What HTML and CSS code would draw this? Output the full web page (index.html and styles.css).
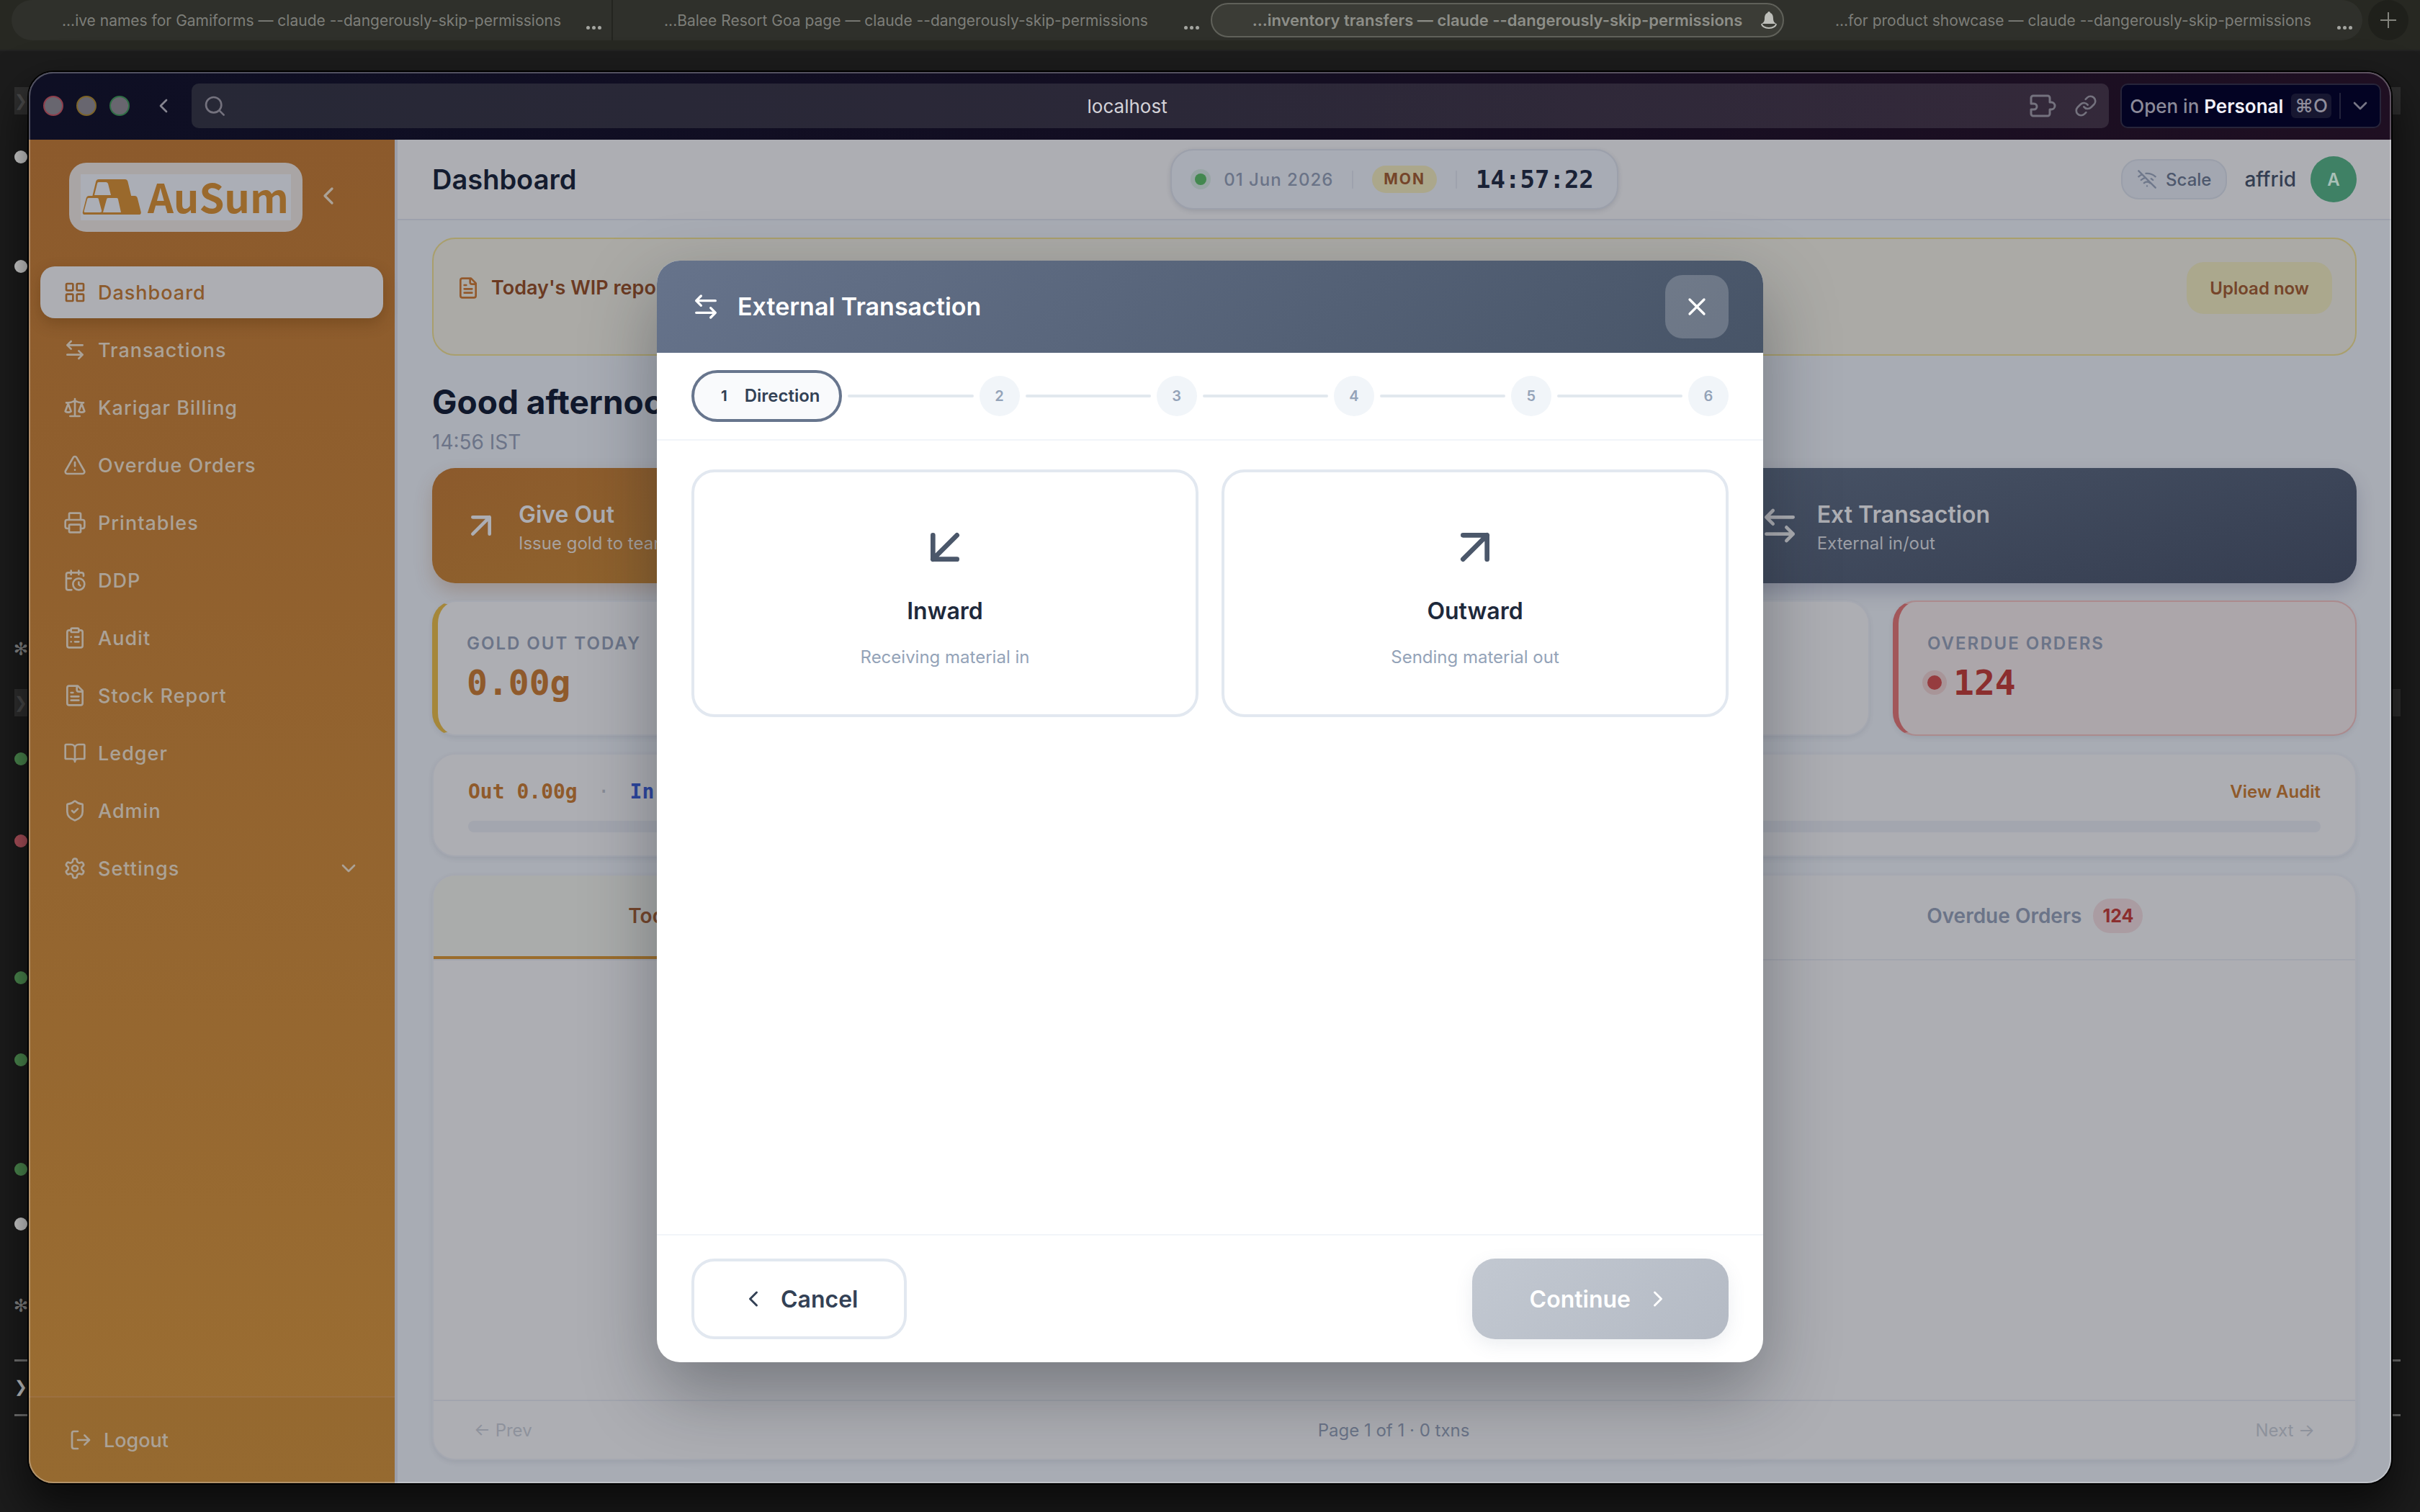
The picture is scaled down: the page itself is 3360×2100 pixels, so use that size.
FILE: index.html
```html
<!DOCTYPE html>
<html lang="en">
<head>
<meta charset="utf-8">
<title>AuSum – Dashboard</title>
<meta name="viewport" content="width=device-width, initial-scale=1">
<link rel="stylesheet" href="styles.css">
</head>
<body>
<svg class="sprite" aria-hidden="true">
  <symbol id="i-grid" viewBox="0 0 24 24"><rect x="3" y="3" width="7" height="7" rx="1"/><rect x="14" y="3" width="7" height="7" rx="1"/><rect x="14" y="14" width="7" height="7" rx="1"/><rect x="3" y="14" width="7" height="7" rx="1"/></symbol>
  <symbol id="i-swap" viewBox="0 0 24 24"><path d="M8 3 4 7l4 4M4 7h16M16 21l4-4-4-4M20 17H4"/></symbol>
  <symbol id="i-scale" viewBox="0 0 24 24"><path d="m16 16 3-8 3 8c-.87.65-1.92 1-3 1s-2.13-.35-3-1ZM2 16l3-8 3 8c-.87.65-1.92 1-3 1s-2.13-.35-3-1ZM7 21h10M12 3v18M3 7h2c2 0 5-1 7-2 2 1 5 2 7 2h2"/></symbol>
  <symbol id="i-alert" viewBox="0 0 24 24"><path d="m21.73 18-8-14a2 2 0 0 0-3.48 0l-8 14A2 2 0 0 0 4 21h16a2 2 0 0 0 1.73-3ZM12 9v4M12 17h.01"/></symbol>
  <symbol id="i-print" viewBox="0 0 24 24"><path d="M6 18H4a2 2 0 0 1-2-2v-5a2 2 0 0 1 2-2h16a2 2 0 0 1 2 2v5a2 2 0 0 1-2 2h-2M6 9V3a1 1 0 0 1 1-1h10a1 1 0 0 1 1 1v6"/><rect x="6" y="14" width="12" height="8" rx="1"/></symbol>
  <symbol id="i-calclock" viewBox="0 0 24 24"><path d="M21 7.5V6a2 2 0 0 0-2-2H5a2 2 0 0 0-2 2v14a2 2 0 0 0 2 2h3.500M16 2v4M8 2v4M3 10h5M17.500 17.500 16 16.300V14"/><circle cx="16" cy="16" r="6"/></symbol>
  <symbol id="i-clip" viewBox="0 0 24 24"><rect x="8" y="2" width="8" height="4" rx="1"/><path d="M16 4h2a2 2 0 0 1 2 2v14a2 2 0 0 1-2 2H6a2 2 0 0 1-2-2V6a2 2 0 0 1 2-2h2M12 11h4M12 16h4M8 11h.01M8 16h.01"/></symbol>
  <symbol id="i-file" viewBox="0 0 24 24"><path d="M15 2H6a2 2 0 0 0-2 2v16a2 2 0 0 0 2 2h12a2 2 0 0 0 2-2V7ZM14 2v4a2 2 0 0 0 2 2h4M10 9H8M16 13H8M16 17H8"/></symbol>
  <symbol id="i-book" viewBox="0 0 24 24"><path d="M12 7v14M3 18a1 1 0 0 1-1-1V4a1 1 0 0 1 1-1h5a4 4 0 0 1 4 4 4 4 0 0 1 4-4h5a1 1 0 0 1 1 1v13a1 1 0 0 1-1 1h-6a3 3 0 0 0-3 3 3 3 0 0 0-3-3z"/></symbol>
  <symbol id="i-shield" viewBox="0 0 24 24"><path d="M20 13c0 5-3.500 7.500-7.660 8.950a1 1 0 0 1-.67-.01C7.500 20.500 4 18 4 13V6a1 1 0 0 1 1-1c2 0 4.500-1.200 6.240-2.720a1.170 1.170 0 0 1 1.520 0C14.510 3.810 17 5 19 5a1 1 0 0 1 1 1zM9 12l2 2 4-4"/></symbol>
  <symbol id="i-gear" viewBox="0 0 24 24"><path d="M12.220 2h-.44a2 2 0 0 0-2 2v.18a2 2 0 0 1-1 1.730l-.43.25a2 2 0 0 1-2 0l-.15-.08a2 2 0 0 0-2.730.73l-.22.38a2 2 0 0 0 .73 2.730l.15.1a2 2 0 0 1 1 1.720v.51a2 2 0 0 1-1 1.740l-.15.09a2 2 0 0 0-.73 2.730l.22.38a2 2 0 0 0 2.730.73l.15-.08a2 2 0 0 1 2 0l.43.25a2 2 0 0 1 1 1.730V20a2 2 0 0 0 2 2h.44a2 2 0 0 0 2-2v-.18a2 2 0 0 1 1-1.730l.43-.25a2 2 0 0 1 2 0l.15.08a2 2 0 0 0 2.730-.73l.22-.39a2 2 0 0 0-.73-2.730l-.15-.08a2 2 0 0 1-1-1.740v-.5a2 2 0 0 1 1-1.740l.15-.09a2 2 0 0 0 .73-2.730l-.22-.38a2 2 0 0 0-2.730-.73l-.15.08a2 2 0 0 1-2 0l-.43-.25a2 2 0 0 1-1-1.730V4a2 2 0 0 0-2-2z"/><circle cx="12" cy="12" r="3"/></symbol>
  <symbol id="i-logout" viewBox="0 0 24 24"><path d="M9 21H5a2 2 0 0 1-2-2V5a2 2 0 0 1 2-2h4M16 17l5-5-5-5M21 12H9"/></symbol>
  <symbol id="i-down" viewBox="0 0 24 24"><path d="m6 9 6 6 6-6"/></symbol>
  <symbol id="i-left" viewBox="0 0 24 24"><path d="m15 18-6-6 6-6"/></symbol>
  <symbol id="i-right" viewBox="0 0 24 24"><path d="m9 18 6-6-6-6"/></symbol>
  <symbol id="i-upright" viewBox="0 0 24 24"><path d="M7 7h10v10M7 17 17 7"/></symbol>
  <symbol id="i-downleft" viewBox="0 0 24 24"><path d="M17 7 7 17M17 17H7V7"/></symbol>
  <symbol id="i-close" viewBox="0 0 24 24"><path d="M18 6 6 18M6 6l12 12"/></symbol>
  <symbol id="i-search" viewBox="0 0 24 24"><circle cx="11" cy="11" r="8"/><path d="m17 17 4.500 4.500"/></symbol>
  <symbol id="i-wifioff" viewBox="0 0 24 24"><path d="M12 20h.01M8.500 16.430a5 5 0 0 1 7 0M5 12.860a10 10 0 0 1 5.170-2.690M19 12.860a10 10 0 0 0-2-1.520M2 8.820a15 15 0 0 1 4.180-2.640M22 8.820a15 15 0 0 0-11.290-3.760M2 2l20 20"/></symbol>
  <symbol id="i-puzzle" viewBox="0 0 38 32"><path d="M3 13V5a3 3 0 0 1 3-3h20a3 3 0 0 1 3 3v6h2a5 5 0 0 1 0 10h-2v6a3 3 0 0 1-3 3H6a3 3 0 0 1-3-3v-6h4a4 4 0 0 0 0-8Z"/></symbol>
  <symbol id="i-link" viewBox="0 0 24 24"><path d="M10 13a5 5 0 0 0 7.540.54l3-3a5 5 0 0 0-7.070-7.070l-1.720 1.710M14 11a5 5 0 0 0-7.540-.54l-3 3a5 5 0 0 0 7.070 7.070l1.710-1.710"/></symbol>
</svg>

<div class="desktop">
  <div class="term-bar">
    <div class="term-tabs">
      <div class="term-tab"><span class="term-title">...ive names for Gamiforms — claude --dangerously-skip-permissions</span><span class="dots"><i></i><i></i><i></i></span></div>
      <div class="term-tab term-tab-split"><span class="term-title">...Balee Resort Goa page — claude --dangerously-skip-permissions</span><span class="dots"><i></i><i></i><i></i></span></div>
      <div class="term-tab term-tab-on"><span class="term-title">...inventory transfers — claude --dangerously-skip-permissions</span><svg class="bell" viewBox="0 0 24 26"><path d="M12 1c1 0 2 1 2 2 3 1 4 4 4 8 0 3 1 5 4 7H2c3-2 4-4 4-7 0-4 1-7 4-8 0-1 1-2 2-2Z"/><path class="bell-ring" d="M2 18c0 3 4 6 10 6s10-3 10-6"/></svg></div>
      <div class="term-tab"><span class="term-title">...for product showcase — claude --dangerously-skip-permissions</span><span class="dots"><i></i><i></i><i></i></span></div>
    </div>
    <button class="term-add" aria-label="New tab"></button>
  </div>
<pre class="term"><span class="t-hl">❯</span>

<b class="w"></b>



<b class="w"></b>













<em>✻</em>

<span class="t-hl">❯</span>

<b class="g"></b>


<b class="r"></b>




<b class="g"></b>


<b class="g"></b>



<b class="g"></b>

<b class="w"></b>


<em>✻</em>

<span class="t-rule"></span>
<strong>❯</strong>
<span class="t-rule"></span></pre>

  <div class="window">
    <div class="toolbar">
      <div class="lights"><span class="light light-r"></span><span class="light light-y"></span><span class="light light-g"></span></div>
      <button class="nav-back" aria-label="Back"><svg class="ic ic-32"><use href="#i-left"/></svg></button>
      <label class="address">
        <svg class="ic ic-32"><use href="#i-search"/></svg>
        <input type="text" value="localhost" aria-label="Address">
        <svg class="puzzle"><use href="#i-puzzle"/></svg>
        <svg class="ic ic-32"><use href="#i-link"/></svg>
      </label>
      <div class="open-in">
        <button class="open-btn">Open in <b>Personal</b><kbd>⌘O</kbd></button>
        <button class="open-more" aria-label="More"><svg class="ic ic-32"><use href="#i-down"/></svg></button>
      </div>
    </div>

    <div class="app">
      <aside class="sidebar">
        <div class="brand">
          <div class="logo">
            <div class="logo-in">
              <svg class="bars" viewBox="0 0 82 52"><path class="bar-side" d="M22 1h40q3 0 4 3l5 20h5q3 0 4 3l5 19q1 4-3 4H4q-4 0-3-4l5-19q1-3 4-3h5l5-20q1-3 4-3Z" transform="scale(.96 1)"/><path class="bar-face" d="M23 5h10q2 0 3 2l4 16H17l4-16q0-2 2-2ZM9 27h12q2 0 2 2l4 15q1 3-2 3H4q-2 0-1-3l4-15q0-2 2-2ZM36 27h12q2 0 2 2l4 18H29l5-18q0-2 2-2Z"/></svg>
              <span class="logo-name">AuSum</span>
            </div>
          </div>
          <button class="collapse" aria-label="Collapse menu"><svg class="ic ic-40"><use href="#i-left"/></svg></button>
        </div>
        <nav class="nav">
          <a class="nav-item nav-on" href="#"><svg class="ic ic-32"><use href="#i-grid"/></svg>Dashboard</a>
          <a class="nav-item" href="#"><svg class="ic ic-32"><use href="#i-swap"/></svg>Transactions</a>
          <a class="nav-item" href="#"><svg class="ic ic-32"><use href="#i-scale"/></svg>Karigar Billing</a>
          <a class="nav-item" href="#"><svg class="ic ic-32"><use href="#i-alert"/></svg>Overdue Orders</a>
          <a class="nav-item" href="#"><svg class="ic ic-32"><use href="#i-print"/></svg>Printables</a>
          <a class="nav-item" href="#"><svg class="ic ic-32"><use href="#i-calclock"/></svg>DDP</a>
          <a class="nav-item" href="#"><svg class="ic ic-32"><use href="#i-clip"/></svg>Audit</a>
          <a class="nav-item" href="#"><svg class="ic ic-32"><use href="#i-file"/></svg>Stock Report</a>
          <a class="nav-item" href="#"><svg class="ic ic-32"><use href="#i-book"/></svg>Ledger</a>
          <a class="nav-item" href="#"><svg class="ic ic-32"><use href="#i-shield"/></svg>Admin</a>
          <a class="nav-item" href="#"><svg class="ic ic-32"><use href="#i-gear"/></svg>Settings<svg class="ic ic-32 nav-more"><use href="#i-down"/></svg></a>
        </nav>
        <div class="side-foot"><a class="logout" href="#"><svg class="ic ic-32"><use href="#i-logout"/></svg>Logout</a></div>
      </aside>

      <main class="main">
        <header class="head">
          <h1 class="head-title">Dashboard</h1>
          <div class="clock">
            <span class="live"></span>
            <span class="date">01 Jun 2026</span>
            <span class="sep"></span>
            <span class="day">MON</span>
            <span class="sep"></span>
            <time class="time">14:57:22</time>
          </div>
          <div class="user">
            <button class="scale-btn"><svg class="ic ic-28"><use href="#i-wifioff"/></svg>Scale</button>
            <span class="user-name">affrid</span>
            <span class="avatar">A</span>
          </div>
        </header>

        <div class="content">
          <section class="notice">
            <svg class="ic ic-32"><use href="#i-file"/></svg>
            <p>Today's WIP report</p>
            <button class="upload">Upload now</button>
          </section>

          <h2 class="hello">Good afternoon</h2>
          <p class="hello-time">14:56 IST</p>

          <div class="actions">
            <button class="action action-out"><svg class="ic ic-56"><use href="#i-upright"/></svg><span class="action-text"><b>Give Out</b><small>Issue gold to team</small></span></button>
            <button class="action action-ext"><svg class="ic ic-56"><use href="#i-swap"/></svg><span class="action-text"><b>Ext Transaction</b><small>External in/out</small></span></button>
          </div>

          <div class="stats">
            <div class="stat stat-gold"><span class="stat-label">GOLD OUT TODAY</span><span class="stat-value">0.00g</span></div>
            <div class="stat"></div>
            <div class="stat"></div>
            <div class="stat stat-red"><span class="stat-label">OVERDUE ORDERS</span><span class="stat-value"><i class="pulse"></i>124</span></div>
          </div>

          <section class="card flow">
            <div class="flow-row"><span class="flow-out">Out 0.00g</span><span class="flow-dot">·</span><span class="flow-in">In 0.00g</span><a class="flow-link" href="#">View Audit</a></div>
            <div class="track"></div>
          </section>

          <section class="card txns">
            <div class="tabs">
              <button class="tab tab-on">Today's Transactions<span class="count">0</span></button>
              <button class="tab tab-last">Overdue Orders<span class="count">124</span></button>
            </div>
            <div class="txn-body"></div>
            <div class="pager"><button class="page-btn" disabled>← Prev</button><span class="page-info">Page 1 of 1 · 0 txns</span><button class="page-btn" disabled>Next →</button></div>
          </section>
        </div>
      </main>

      <div class="overlay">
        <div class="modal" role="dialog" aria-labelledby="dlg-title">
          <div class="dlg-head">
            <svg class="ic ic-40"><use href="#i-swap"/></svg>
            <h2 id="dlg-title">External Transaction</h2>
            <button class="dlg-close" aria-label="Close"><svg class="ic ic-40"><use href="#i-close"/></svg></button>
          </div>
          <div class="steps">
            <span class="step step-on"><span class="step-no">1</span>Direction</span><i class="step-line"></i>
            <span class="step">2</span><i class="step-line"></i>
            <span class="step">3</span><i class="step-line"></i>
            <span class="step">4</span><i class="step-line"></i>
            <span class="step">5</span><i class="step-line"></i>
            <span class="step">6</span>
          </div>
          <div class="dlg-body">
            <button class="choice"><svg class="ic ic-80"><use href="#i-downleft"/></svg><b>Inward</b><span>Receiving material in</span></button>
            <button class="choice"><svg class="ic ic-80"><use href="#i-upright"/></svg><b>Outward</b><span>Sending material out</span></button>
          </div>
          <div class="dlg-foot">
            <button class="btn btn-cancel"><svg class="ic ic-36"><use href="#i-left"/></svg>Cancel</button>
            <button class="btn btn-next" disabled>Continue<svg class="ic ic-36"><use href="#i-right"/></svg></button>
          </div>
        </div>
      </div>
    </div>
  </div>
</div>
</body>
</html>
```
FILE: styles.css
```css
*, *::before, *::after { box-sizing: border-box; }
html, body { height: 100%; margin: 0; }
body { font-family: Inter, "Noto Sans", sans-serif; color: #141c2f; background: #1c1c1c; }
h1, h2, p { margin: 0; }
button, input { font: inherit; color: inherit; background: none; border: 0; padding: 0; margin: 0; text-align: inherit; }
a { color: inherit; text-decoration: none; }
.sprite { position: absolute; width: 0; height: 0; }

.ic { flex: none; fill: none; stroke: currentColor; stroke-width: 2; stroke-linecap: round; stroke-linejoin: round; }
.ic-28 { width: 28px; height: 28px; }
.ic-32 { width: 32px; height: 32px; }
.ic-36 { width: 36px; height: 36px; }
.ic-40 { width: 40px; height: 40px; }
.ic-56 { width: 56px; height: 56px; }
.ic-80 { width: 80px; height: 80px; }

/* Terminal behind the browser */
.desktop { position: relative; min-height: 100vh; overflow: hidden; background: #1c1c1c; }
.term-bar { display: flex; align-items: flex-start; gap: 8px; height: 71px; padding: 0 16px; background: #272822; border-bottom: 2px solid #222; }
.term-tabs { flex: 1; display: grid; grid-template-columns: 833fr 832fr 796fr 803fr; height: 56px; background: #2f302b; border-radius: 28px; }
.term-tab { display: grid; grid-template-columns: 1fr auto 1fr; align-items: center; font-size: 21px; color: #7d7e79; white-space: nowrap; }
.term-title { grid-column: 2; }
.term-tab-split { padding-right: 16px; border-left: 2px solid #242520; }
.term-tab-split .dots { padding-right: 0; }
.term-tab-on { margin: 4px 0; border: 2px solid #60615a; border-radius: 24px; background: #3b3c36; color: #8d8e88; font-size: 22px; font-weight: 600; }
.dots { display: flex; gap: 3px; justify-self: end; padding: 20px 14px 0 0; }
.dots i { width: 5px; height: 5px; border-radius: 50%; background: #a4a5a0; }
.bell { justify-self: end; width: 24px; height: 26px; margin-right: 7px; fill: #bdbeb9; }
.bell-ring { fill: none; stroke: #bdbeb9; stroke-width: 2; }
.term-add { flex: none; width: 56px; height: 56px; border-radius: 50%; background: linear-gradient(#83847d, #83847d) center / 22px 2px no-repeat, linear-gradient(#83847d, #83847d) center / 2px 22px no-repeat, #1f201b; }
.term { margin: 0; padding: 50px 27px 0 20px; font: 30px/38px "DejaVu Sans Mono", monospace; color: #8b8b8b; }
.term b { display: inline-block; width: 18px; height: 18px; border-radius: 50%; vertical-align: middle; }
.term em { font-style: normal; display: inline-block; height: 38px; vertical-align: top; }
.term strong { font-weight: 700; color: #ccc; }
.w { background: #d6d6d6; }
.g { background: #4f8f52; }
.r { background: #b5545f; }
.t-hl { display: inline-block; vertical-align: top; width: 100%; height: 38px; background: #303030; color: #4c4c4c; }
.t-rule { display: inline-block; vertical-align: middle; width: 100%; height: 3px; background: #777; }

/* Browser window */
.window { position: absolute; inset: 100px 40px 40px; display: flex; flex-direction: column; border-radius: 34px; overflow: hidden; background: #a8acb4; }
.window::after { content: ""; position: absolute; inset: 0; border: 2px solid rgba(255, 255, 255, .28); border-radius: 34px; pointer-events: none; }
.desktop::before { content: ""; position: absolute; inset: 100px 40px 40px; border-radius: 34px; box-shadow: 0 0 0 2px #000, 0 30px 60px 6px rgba(0, 0, 0, .6); }
.toolbar { flex: none; display: flex; align-items: center; height: 94px; padding: 0 14px 0 20px; background: linear-gradient(100deg, #0e0f24, #130e22 50%, #1f0f22); }
.lights { display: flex; gap: 18px; }
.light { width: 28px; height: 28px; border-radius: 50%; border: 2px solid; background: #68666f; }
.light-r { border-color: #8f3f4c; }
.light-y { border-color: #7d6428; }
.light-g { border-color: #2f6f45; }
.nav-back { display: grid; place-items: center; width: 56px; margin: 0 11px 0 19px; color: #85848f; }
.address { flex: 1; display: flex; align-items: center; gap: 24px; height: 62px; padding: 0 16px; border-radius: 10px; background: linear-gradient(100deg, #272836, #2b2838 50%, #34293a); color: #74727e; }
.address input { flex: 1; min-width: 0; text-align: center; font-size: 26px; color: #d4d3d8; }
.puzzle { width: 40px; height: 32px; fill: none; stroke: currentColor; stroke-width: 3; stroke-linejoin: round; }
.open-in { display: flex; align-items: center; height: 62px; margin-left: 16px; border: 2px solid #27253a; border-radius: 10px; background: #030323; font-size: 26px; color: #8b8a99; }
.open-btn { display: flex; align-items: center; gap: 7px; padding: 0 11px; font-weight: 500; }
.open-btn b { font-weight: 600; color: #f2f1f8; }
.open-btn kbd { margin-left: 4px; padding: 0 5px; border-radius: 6px; font: 500 26px/34px Inter, "DejaVu Sans", sans-serif; background: #171731; color: #8f8e9c; }
.open-more { display: grid; place-items: center; width: 56px; height: 36px; border-left: 2px solid #23233b; color: #777686; }

/* App shell */
.app { position: relative; flex: 1; display: flex; min-height: 0; }
.sidebar { flex: none; display: flex; flex-direction: column; width: 512px; border-right: 4px solid #9b9ea9; background: linear-gradient(#8c5a2c, #9b6e32); color: #aba297; }
.brand { display: flex; align-items: center; gap: 16px; padding: 32px 0 48px 56px; }
.logo { width: 324px; height: 96px; padding: 16px; border-radius: 24px; background: #a9a5a5; }
.logo-in { display: flex; align-items: center; gap: 9px; height: 64px; padding-left: 2px; background: #abaeb6; }
.bars { flex: none; width: 82px; height: 52px; }
.bar-side { fill: #9a692c; }
.bar-face { fill: #abaeb6; }
.logo-name { padding-bottom: 4px; font: 700 56px/60px "Noto Sans CJK JP", "Noto Sans", sans-serif; color: #9a692c; }
.nav { flex: 1; display: flex; flex-direction: column; gap: 8px; padding: 0 16px; }
.nav-item { display: flex; align-items: center; gap: 16px; height: 72px; padding: 0 32px; border-radius: 20px; font-size: 27px; font-weight: 500; letter-spacing: 1px; }
.nav-on { background: #adaeb3; color: #8c5a2c; box-shadow: 0 8px 20px rgba(60, 30, 0, .25); }
.nav-more { margin-left: auto; }
.side-foot { padding: 23px 0; height: 121px; border-top: 2px solid #9c7040; background: rgba(90, 50, 20, .06); }
.logout { display: flex; align-items: center; gap: 16px; height: 72px; padding: 0 56px; font-size: 27px; font-weight: 500; }

.main { flex: 1; min-width: 0; display: flex; flex-direction: column; }
.head { flex: none; display: grid; grid-template-columns: 1fr auto 1fr; align-items: center; height: 112px; padding: 0 48px; background: #adaeb3; border-bottom: 2px solid #9da1ac; }
.head-title { font-size: 38px; line-height: 48px; font-weight: 600; }
.clock { display: flex; align-items: center; height: 84px; padding: 0 32px; border: 2px solid #9ca0ab; border-radius: 32px; background: #a8acb5; box-shadow: 0 2px 6px rgba(40, 50, 70, .15); }
.live { width: 16px; height: 16px; border-radius: 50%; background: #43884f; box-shadow: 0 0 0 6px rgba(67, 136, 79, .16); }
.date { margin-left: 24px; font-size: 24px; font-weight: 500; letter-spacing: 1px; color: #6a7387; }
.sep { width: 2px; height: 25px; margin: 0 26px; background: #9ea2ad; }
.day { padding: 0 16px; border-radius: 19px; font-size: 21px; line-height: 38px; font-weight: 700; letter-spacing: 2px; background: #aba78b; color: #75452a; }
.time { font: 700 34px/44px "DejaVu Sans Mono", monospace; color: #1a2236; }
.user { justify-self: end; display: flex; align-items: center; font-size: 28px; color: #343e52; }
.scale-btn { display: flex; align-items: center; gap: 12px; height: 56px; padding: 0 20px; border: 2px solid #9a9faa; border-radius: 24px; background: #a3a7b1; font-size: 24px; font-weight: 500; color: #4e586d; }
.scale-btn .ic { color: #6f788b; }
.user-name { margin: 0 20px 0 24px; font-weight: 500; }
.avatar { display: grid; place-items: center; width: 64px; height: 64px; border-radius: 50%; background: #3f8165; color: #a9c0b7; font-size: 24px; font-weight: 600; }

.content { flex: 1; display: flex; flex-direction: column; padding: 24px 48px 32px; }
.notice { display: flex; align-items: flex-start; height: 164px; padding: 32px; border: 2px solid #a99f6c; border-radius: 32px; background: #abaaa6; color: #6b3a22; }
.notice .ic { margin: 20px 16px 0 0; color: #93592c; }
.notice p { flex: 1; font-size: 27px; line-height: 72px; font-weight: 600; }
.upload { height: 72px; padding: 0 32px; border-radius: 24px; background: #aba88d; font-size: 24px; font-weight: 600; color: #75452a; }
.hello { margin-top: 34px; font-size: 46px; line-height: 60px; font-weight: 700; color: #10182c; }
.hello-time { margin: 6px 0 16px; font-size: 28px; line-height: 40px; color: #6c7488; }

.actions { display: grid; grid-template-columns: repeat(3, 1fr); gap: 32px; margin-bottom: 24px; }
.action { display: flex; align-items: center; gap: 24px; height: 160px; padding: 0 40px; border-radius: 32px; color: #adaeb3; }
.action-out { background: linear-gradient(160deg, #8c5a2c, #91692e); box-shadow: 0 12px 24px rgba(120, 70, 40, .25); }
.action-ext { grid-column: 3; background: linear-gradient(165deg, #475265, #353d50); box-shadow: 0 12px 24px rgba(50, 55, 90, .25); }
.action-text { display: flex; flex-direction: column; padding-top: 6px; }
.action-text b { font-size: 32px; line-height: 44px; font-weight: 600; }
.action-text small { font-size: 24px; line-height: 36px; opacity: .85; }

.stats { display: grid; grid-template-columns: repeat(4, 1fr); gap: 32px; margin-bottom: 24px; }
.stat { display: flex; flex-direction: column; height: 188px; padding: 38px 40px; border: 2px solid #a5a8b1; border-radius: 32px; background: #adaeb3; box-shadow: 0 3px 6px rgba(60, 70, 90, .1); }
.stat-label { font-size: 24px; line-height: 40px; font-weight: 600; letter-spacing: 2px; color: #6b7488; }
.stat-value { display: flex; align-items: center; gap: 16px; font: 700 48px/68px "DejaVu Sans Mono", monospace; }
.stat-gold { border-left: 8px solid #a5873a; color: #8f5a2b; }
.stat-red { border-color: #ab8a8d; border-left: 8px solid #a2575a; background: #aca6aa; color: #8b2e2e; }
.pulse { width: 20px; height: 20px; border-radius: 50%; background: #963c3f; box-shadow: 0 0 0 7px rgba(150, 60, 63, .16); }

.card { border: 2px solid #a5a8b1; border-radius: 32px; background: #adaeb3; box-shadow: 0 3px 6px rgba(60, 70, 90, .1); }
.flow { height: 144px; margin-bottom: 24px; padding: 32px 48px; }
.flow-row { display: flex; align-items: center; height: 40px; font: 600 28px/40px "DejaVu Sans Mono", monospace; }
.flow-out { color: #8f5a2b; }
.flow-dot { margin: 0 28px; font-weight: 400; color: #878b96; }
.flow-in { color: #2b469f; }
.flow-link { margin-left: auto; font: 600 24px/40px Inter, sans-serif; color: #8f5a2b; }
.track { height: 16px; margin-top: 20px; border-radius: 8px; background: #a3a6af; }

.txns { flex: 1; display: flex; flex-direction: column; overflow: hidden; }
.tabs { display: grid; grid-template-columns: repeat(3, 1fr); height: 118px; border-bottom: 2px solid #a2a5ae; }
.tab { display: flex; align-items: center; justify-content: center; gap: 16px; border-bottom: 4px solid transparent; font-size: 28px; font-weight: 600; color: #6b7488; }
.tab-on { border-color: #9b6d2c; background: #aaacab; color: #75452a; }
.tab-last { grid-column: 3; }
.count { padding: 0 13px; border-radius: 24px; font-size: 25px; line-height: 48px; font-weight: 700; background: #aa9ca2; color: #8b2e2e; }
.txn-body { flex: 1; }
.pager { display: flex; align-items: center; justify-content: space-between; height: 82px; padding: 0 56px; border-top: 2px solid #a2a5ae; font-size: 24px; }
.page-btn { color: #8e929c; }
.page-info { color: #6b7488; }

/* Dialog */
.overlay { position: absolute; inset: 0; display: grid; place-items: center; }
.modal { display: flex; flex-direction: column; width: 1536px; max-width: 92%; height: 82%; border-radius: 32px; overflow: hidden; background: #fff; box-shadow: 0 40px 100px rgba(20, 24, 34, .36); }
.dlg-head { flex: none; display: flex; align-items: center; gap: 24px; height: 128px; padding: 0 48px; background: linear-gradient(135deg, #66738b, #475467); color: #fff; }
.dlg-head h2 { flex: 1; font-size: 34px; line-height: 48px; font-weight: 600; }
.dlg-close { display: grid; place-items: center; width: 88px; height: 88px; border-radius: 24px; background: rgba(255, 255, 255, .2); }
.steps { flex: none; display: flex; align-items: center; gap: 8px; height: 122px; padding: 0 48px; border-bottom: 2px solid #f1f5f9; }
.step { flex: none; display: flex; align-items: center; justify-content: center; width: 56px; height: 56px; border-radius: 36px; background: #f1f5f9; font-size: 20px; font-weight: 600; color: #94a3b8; }
.step-on { width: auto; height: 72px; padding: 0 27px; gap: 24px; border: 4px solid #67758d; background: #f9fafc; font-size: 24px; color: #334155; }
.step-no { padding-left: 10px; font-size: 20px; font-weight: 700; }
.step-line { flex: 1; height: 4px; border-radius: 2px; background: #e2e8ee; }
.dlg-body { flex: 1; display: grid; grid-template-columns: 1fr 1fr; align-items: start; gap: 32px; padding: 40px 48px; }
.choice { display: flex; flex-direction: column; align-items: center; height: 344px; padding-top: 64px; border: 4px solid #e2e8f0; border-radius: 32px; color: #4b576a; }
.choice b { margin-top: 25px; font-size: 32px; line-height: 48px; font-weight: 600; color: #1e293b; }
.choice span { margin-top: 20px; font-size: 24px; line-height: 40px; color: #94a3b8; }
.dlg-foot { flex: none; display: flex; align-items: center; justify-content: space-between; height: 178px; padding: 0 48px; border-top: 2px solid #f1f5f9; }
.btn { display: flex; align-items: center; gap: 20px; height: 112px; border-radius: 32px; font-size: 32px; font-weight: 600; }
.btn-cancel { padding: 0 64px; border: 4px solid #e2e8f0; color: #334155; }
.btn-next { padding: 0 80px; background: linear-gradient(135deg, #c2c8d1, #b4bac4); box-shadow: 0 8px 24px rgba(100, 116, 139, .12); color: #fff; }
```
